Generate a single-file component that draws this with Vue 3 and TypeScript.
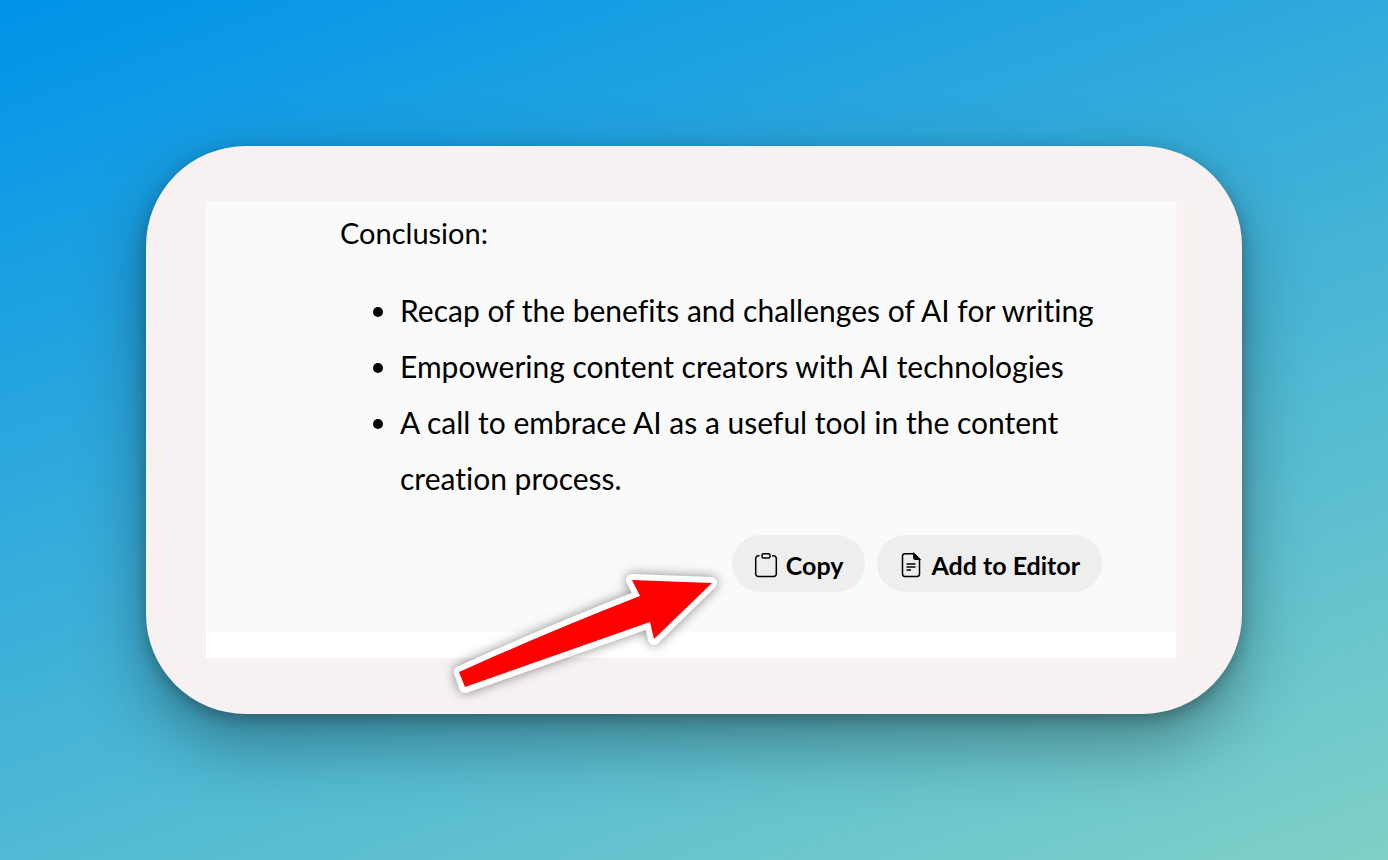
<script setup lang="ts">
const points: string[] = [
  'Recap of the benefits and challenges of AI for writing',
  'Empowering content creators with AI technologies',
  'A call to embrace AI as a useful tool in the content creation process.',
]
const text = `Conclusion:\n\n${points.map((p) => `• ${p}`).join('\n')}`

function copy(): void {
  void navigator.clipboard?.writeText(text)
}
</script>

<template>
  <main class="stage">
    <section class="card">
      <div class="panel">
        <article class="answer">
          <p class="heading">Conclusion:</p>
          <ul class="points">
            <li v-for="point in points" :key="point">{{ point }}</li>
          </ul>
          <div class="actions">
            <button class="pill" type="button" @click="copy">
              <svg width="24" height="26" viewBox="0 0 24 26" fill="none" stroke="#000" stroke-width="1.5" aria-hidden="true">
                <path d="M5.500 3.700H4.500A2.800 2.800 0 0 0 1.700 6.500v15.300a2.700 2.700 0 0 0 2.700 2.700h15.200a2.700 2.700 0 0 0 2.700-2.700V6.500a2.800 2.800 0 0 0-2.800-2.800H18" />
                <rect x="8" y="1.700" width="8" height="4.300" rx="1.500" />
              </svg>
              <span>Copy</span>
            </button>
            <button class="pill" type="button">
              <svg width="24" height="26" viewBox="-2 0 24 26" fill="none" stroke="#000" stroke-width="1.5" aria-hidden="true">
                <path d="M12.500 1.700H4A2.500 2.500 0 0 0 1.500 4.200v17.800a2.500 2.500 0 0 0 2.500 2.500h12a2.500 2.500 0 0 0 2.500-2.500V7.200z" />
                <path d="M12.800 1.700V5.700a1.500 1.500 0 0 0 1.500 1.500h4.200z" fill="#000" />
                <path d="M5.500 12h9M5.500 15h9M5.500 18h4.500" />
              </svg>
              <span>Add to Editor</span>
            </button>
          </div>
        </article>
      </div>
      <svg class="arrow" width="290" height="140" viewBox="0 0 290 140" aria-hidden="true">
        <path class="arrow-edge" d="M271 23L192 20L200 36Q110 71 20 112L25 127L210 62L214 79Z" />
        <path d="M272 23L192 20L200 36Q110 71 19 112L25 127L210 62L214 79Z" fill="#f00" />
      </svg>
    </section>
  </main>
</template>

<style>
body {
  margin: 0;
}
</style>

<style scoped>
.stage {
  box-sizing: border-box;
  min-height: 100vh;
  padding: 146px;
  background: linear-gradient(160deg, #0093e9 0%, #80d0c7 100%);
  font-family: Lato, "Open Sans", sans-serif;
  font-variant-ligatures: none;
  color: #000;
}
.card {
  position: relative;
  padding: 55px 56px 56px 60px;
  border-radius: 100px;
  background: #f7f1f1;
  box-shadow: 0 28px 68px rgba(0, 0, 0, 0.35), 0 5px 16px rgba(0, 0, 0, 0.26);
}
.panel {
  padding-bottom: 26px;
  border-right: 10px solid #f9f4f2;
  background: #fff;
}
.answer {
  padding: 4px 74px 40px 134px;
  background: #fafafa;
}
.heading {
  margin: 0 0 21px;
  font-size: 29px;
  line-height: 56px;
}
.points {
  margin: 0 0 29px;
  padding-left: 60px;
  font-size: 30px;
  line-height: 56px;
}
.actions {
  display: flex;
  justify-content: flex-end;
  gap: 12px;
}
.pill {
  display: flex;
  align-items: center;
  gap: 8px;
  height: 57px;
  padding: 2px 22px 0;
  border: 0;
  border-radius: 29px;
  background: #eee;
  color: #000;
  font-family: inherit;
  font-size: 25px;
  font-weight: 700;
  line-height: 32px;
  white-space: nowrap;
  cursor: pointer;
}
.pill svg {
  flex: none;
}
.arrow {
  position: absolute;
  right: 512px;
  bottom: 14px;
  overflow: visible;
  pointer-events: none;
  filter: drop-shadow(0 0 6px rgba(0, 0, 0, 0.45));
}
.arrow-edge {
  fill: #fff;
  stroke: #fff;
  stroke-width: 12px;
  stroke-linejoin: round;
}
</style>
